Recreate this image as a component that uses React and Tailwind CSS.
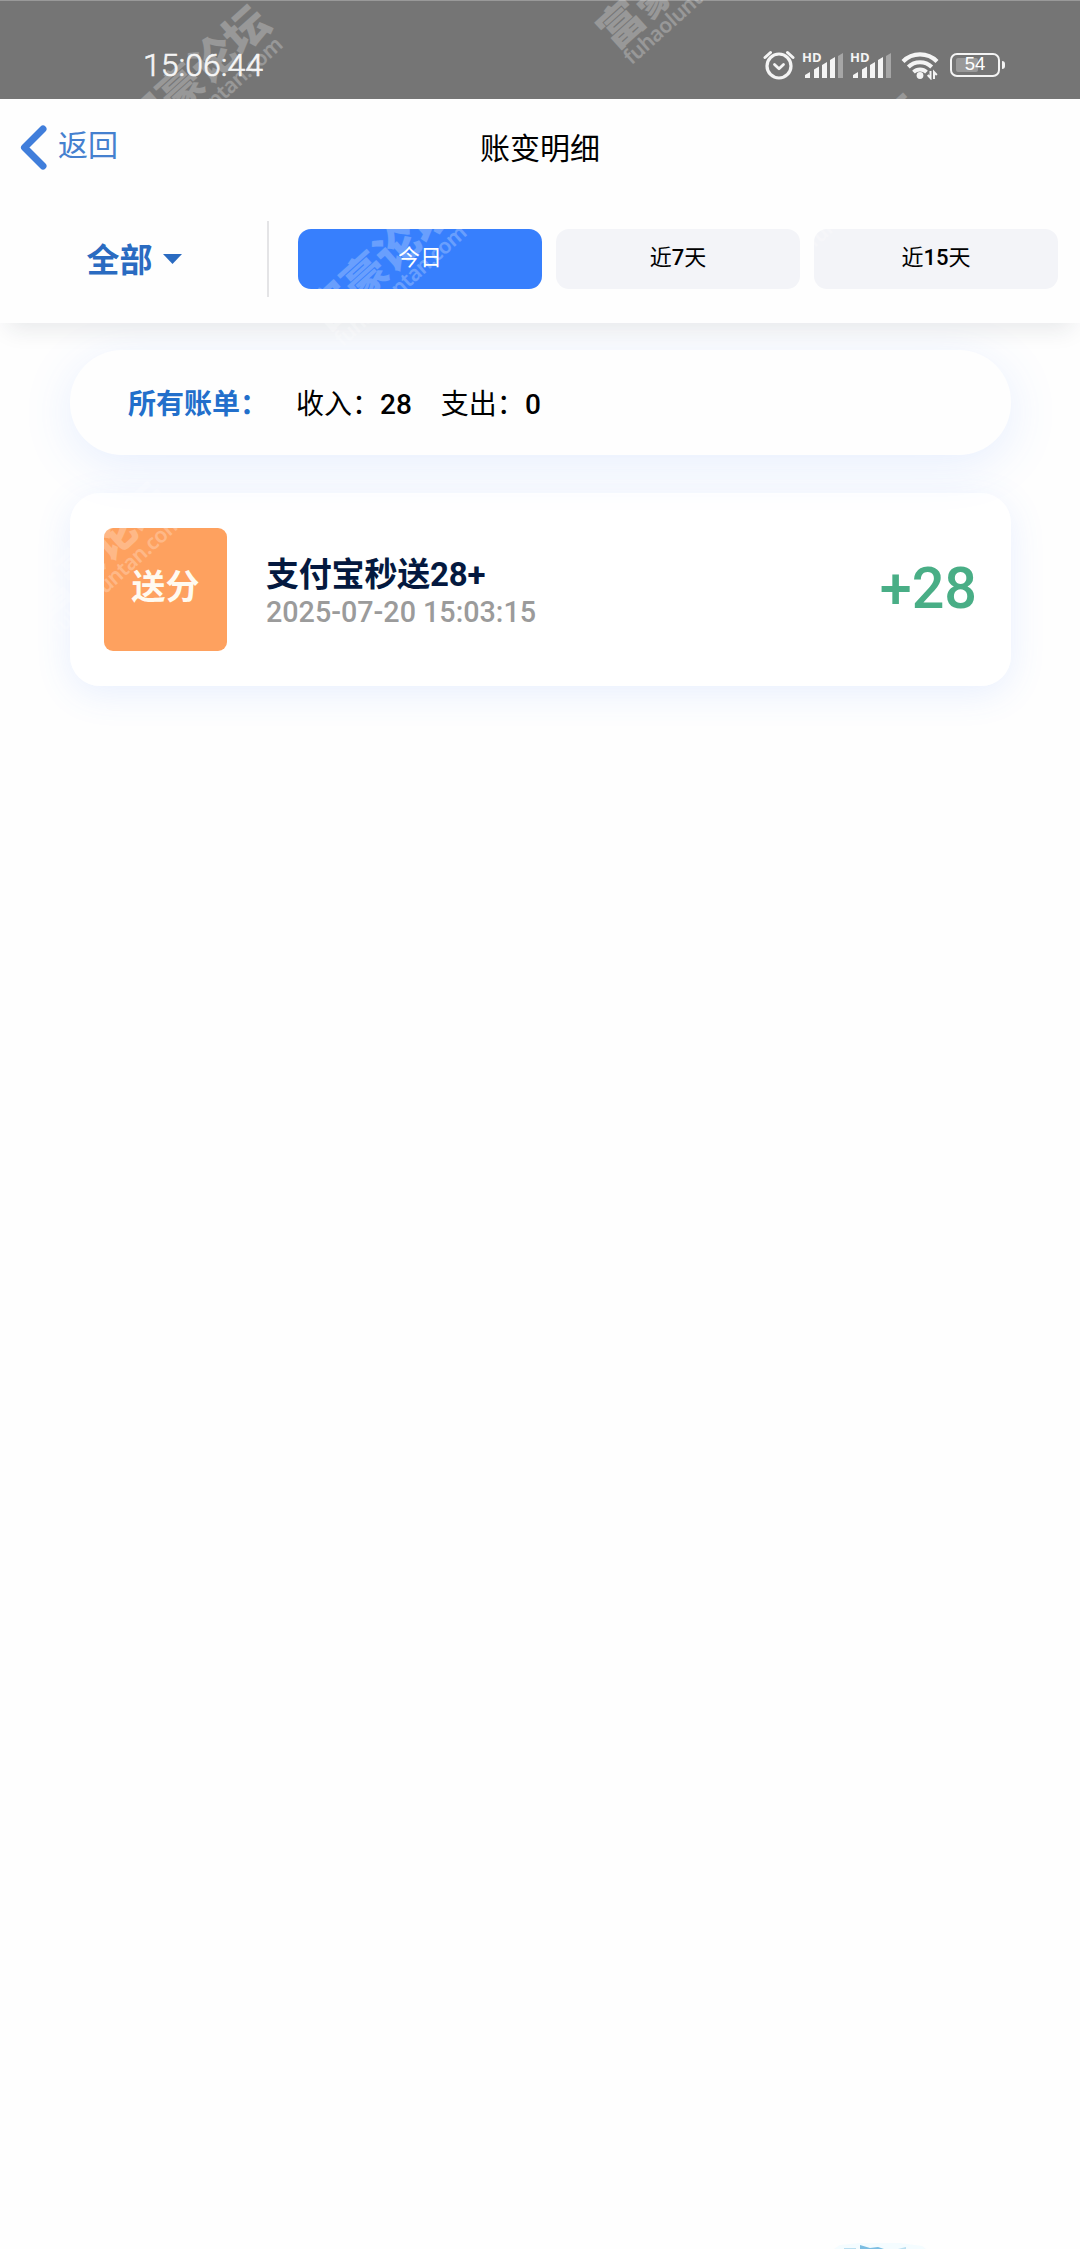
import { useState } from "react";

const RANGES = ["今日", "近7天", "近15天"];

const BILLS = [
  {
    id: 1,
    tag: "送分",
    title: "支付宝秒送28+",
    time: "2025-07-20 15:03:15",
    amount: "+28",
  },
];

const App = () => {
  const [range, setRange] = useState(RANGES[0]);

  return (
    <main className="relative flex h-[2249px] w-[1080px] flex-col overflow-hidden bg-[#fefefe] font-['Roboto','Noto_Sans_CJK_SC',sans-serif] text-black">
      <StatusBar />

      <header className="relative z-20 h-[224px] bg-[#fefefe] shadow-[0_14px_22px_-8px_rgba(30,40,60,0.1)]">
        <nav className="relative flex h-[100px] items-center justify-center">
          <button
            type="button"
            className="absolute left-[20px] top-[26px] flex items-center text-[#4580cf]"
          >
            <svg width="28" height="46" viewBox="0 0 28 46" fill="none">
              <path
                d="M23 4 4.5 22.5 23 41"
                stroke="#407edb"
                strokeWidth="7"
                strokeLinecap="round"
                strokeLinejoin="round"
              />
            </svg>
            <span className="-mt-[5px] ml-[10px] text-[30px] leading-[40px]">
              返回
            </span>
          </button>
          <h1 className="text-[30px] leading-[40px]">账变明细</h1>
        </nav>

        <div className="flex h-[120px] items-center">
          <button
            type="button"
            className="flex h-[76px] w-[269px] items-center justify-center gap-[10px] border-r-2 border-[#e4e4e6] text-[#2a6bc1]"
          >
            <span className="pl-px pt-[3px] text-[33px] font-bold leading-[40px]">
              全部
            </span>
            <svg width="19" height="10" viewBox="0 0 19 10">
              <path d="M0 0h19L9.500 10z" fill="#2a6bc1" />
            </svg>
          </button>
          <div className="ml-[29px] flex gap-[14px]">
            {RANGES.map((item) => (
              <button
                key={item}
                type="button"
                onClick={() => setRange(item)}
                className={`h-[60px] w-[244px] rounded-[13px] pb-[3px] text-[22px] font-medium ${
                  item === range
                    ? "bg-[#377ffd] text-white"
                    : "bg-[#f3f4f8] text-black"
                }`}
              >
                <Mixed text={item} />
              </button>
            ))}
          </div>
        </div>
      </header>

      <section className="flex flex-col gap-[38px] px-[70px] pt-[27px]">
        <div className="relative z-10 flex h-[105px] w-[941px] items-center rounded-[52px] bg-[#fefefe] px-[58px] pt-[4px] text-[28px] leading-[40px] shadow-[0_10px_50px_rgba(70,130,255,0.13)]">
          <span className="font-bold text-[#226fcb]">所有账单：</span>
          <span className="ml-[28px]">
            收入：<b className="font-medium">28</b>
          </span>
          <span className="ml-[29px]">
            支出：<b className="font-medium">0</b>
          </span>
        </div>

        {BILLS.map((bill) => (
          <BillCard key={bill.id} bill={bill} />
        ))}
      </section>

      <svg
        className="mt-auto ml-[832px]"
        width="96"
        height="10"
        viewBox="0 0 96 10"
      >
        <path d="M2 10 8 6 28 4h40l22 3 4 3z" fill="#f4fcff" />
        <path d="M28 10V6l10 3 8-1 6 2z" fill="#7bbde2" />
        <path d="M12 10V9h12v1zM66 10l8-2v2z" fill="#b9def0" />
      </svg>

      <Watermark className="left-[199px] top-[76px]" />
      <Watermark className="left-[672px] top-[-18px]" />
      <Watermark className="left-[383px] top-[264px]" />
      <Watermark className="left-[99px] top-[553px]" />
      <Watermark className="left-[855px] top-[165px]" />
    </main>
  );
};

// digits are medium, chinese stays regular
const Mixed = ({ text }) =>
  text.split(/(\d+)/).map((part, i) => (
    <span key={i} className={/\d/.test(part) ? "font-medium" : "font-normal"}>
      {part}
    </span>
  ));

const BillCard = ({ bill }) => (
  <div className="flex h-[193px] w-[941px] items-center rounded-[30px] bg-white/80 pl-[34px] pr-[34px] shadow-[0_8px_36px_rgba(70,130,255,0.12)]">
    <div className="flex h-[123px] w-[123px] items-center justify-center rounded-[9px] bg-[#fea15f] pb-1 text-[34px] font-bold text-[#fffaf0]">
      {bill.tag}
    </div>
    <div className="ml-[39px] flex flex-1 flex-col pt-[6px]">
      <span className="text-[33px] font-bold leading-[39px] tracking-[-0.2px] text-[#04193f]">
        {bill.title}
      </span>
      <span className="text-[28.7px] font-medium leading-[36px] text-[#9b9b9b]">
        {bill.time}
      </span>
    </div>
    <span className="pb-[2px] text-[57.5px] font-medium leading-none text-[#49ae86]">
      {bill.amount}
    </span>
  </div>
);

const Watermark = ({ className }) => (
  <div
    className={`pointer-events-none absolute z-30 h-0 w-0 text-white opacity-25 ${className}`}
    aria-hidden="true"
  >
    <div className="absolute left-0 top-0 -rotate-42">
      <span className="absolute left-[-88px] top-[-32px] whitespace-nowrap text-[44px] font-black leading-[60px]">
        富豪论坛
      </span>
      <span className="absolute left-[-86px] top-[15px] whitespace-nowrap font-['Noto_Sans'] text-[21px] font-semibold leading-[24px] tracking-[-0.5px]">
        fuhaoluntan.com
      </span>
    </div>
  </div>
);

const StatusBar = () => (
  <div className="flex h-[99px] items-center border-t border-[#999] bg-[#757575] pl-[143px] pr-[75px] pt-[29px] text-[#f4f4f4]">
    <span className="text-[32px] font-light leading-[40px] [-webkit-text-stroke:0.6px_#f4f4f4]">
      15:06:44
    </span>
    <div className="ml-auto flex items-center">
      <svg width="32" height="30" viewBox="0 0 32 30" fill="none">
        <g stroke="#f4f4f4" strokeLinecap="round" strokeLinejoin="round">
          <circle cx="16" cy="16" r="12" strokeWidth="3.200" />
          <path d="m11.500 14.500 4.500 4.300 4.500-4.300" strokeWidth="2.800" />
          <path d="M2 7.500 7.500 2.500M24.500 2.500 30 7.500" strokeWidth="3" />
        </g>
      </svg>
      <Signal className="ml-2" />
      <Signal className="ml-2" />
      <Wifi />
      <Battery level={54} />
    </div>
  </div>
);

const Signal = ({ className }) => (
  <div className={`relative h-[28px] w-[40px] ${className}`}>
    <span className="absolute left-[-1px] top-[-1px] font-['Open_Sans',sans-serif] text-[13px] font-bold leading-[14px]">
      HD
    </span>
    <svg width="40" height="28" viewBox="0 0 40 28" fill="#f4f4f4">
      <path d="M2 27v-3l5-3v6zM11 27V18.500l5-3V27zM19 27V14l5-3v16zM27 27V9l5-3v21z" />
      <path d="M35 27V5l5-3v25z" fill="#a6a6a6" />
    </svg>
  </div>
);

const Wifi = () => (
  <svg
    className="ml-[10px]"
    width="38"
    height="30"
    viewBox="0 0 38 30"
    fill="none"
  >
    <path d="M2 11.500a24 24 0 0 1 34 0" stroke="#f4f4f4" strokeWidth="4.200" />
    <path
      d="M7.300 17a16.500 16.500 0 0 1 23.400 0"
      stroke="#f4f4f4"
      strokeWidth="4"
    />
    <path
      d="M12.500 22.200a9.200 9.200 0 0 1 13 0"
      stroke="#f4f4f4"
      strokeWidth="3.800"
    />
    <circle cx="19" cy="25.500" r="3.400" fill="#f4f4f4" />
    <path
      d="M29.500 21v7l-2.800-3M33 29v-7l2.800 3"
      stroke="#f4f4f4"
      strokeWidth="2"
    />
  </svg>
);

const Battery = ({ level }) => (
  <div className="ml-[11px] flex items-center">
    <div className="relative flex h-[24px] w-[50px] items-center justify-center rounded-[7px] border-2 border-[#f4f4f4]">
      <div
        className="absolute inset-y-[3px] left-[4px] rounded-[2px] bg-[#999]"
        style={{ width: level * 0.4 }}
      />
      <span className="relative font-['Liberation_Sans'] text-[18.5px] leading-none text-white">
        {level}
      </span>
    </div>
    <div className="ml-[2px] h-[8px] w-[3px] rounded-r-sm bg-[#f4f4f4]" />
  </div>
);

export default App;
